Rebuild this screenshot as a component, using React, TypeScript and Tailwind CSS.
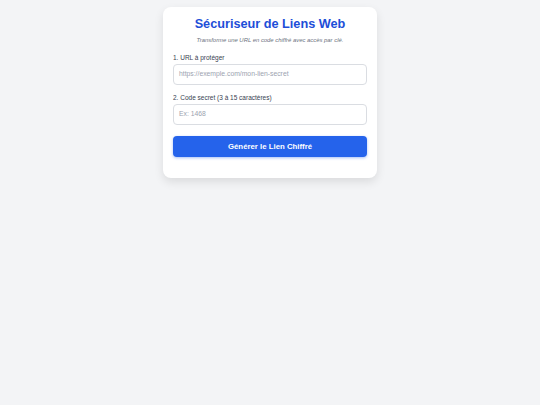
export default function App() {
  return (
    <div className="min-h-[405px] w-full bg-[#f3f4f6] flex justify-center" style={{ fontFamily: '"Liberation Sans", Arial, sans-serif' }}>
      <div className="mt-[7px] w-[214px] h-[171px] bg-white rounded-[8px] shadow-[0_4px_10px_rgba(0,0,0,0.1)] px-[10px] pt-[9px]">
        <h1 className="text-center text-[12.7px] leading-[16px] font-bold text-[#1d4ed8]">Sécuriseur de Liens Web</h1>
        <p className="text-center text-[5.9px] italic text-[#6b7280] mt-[5px] leading-[7px]">Transforme une URL en code chiffré avec accès par clé.</p>
        <div className="mt-[10px]">
          <label className="block text-[6.5px] leading-[8px] text-[#374151]">1. URL à protéger</label>
          <div className="mt-[2px] h-[21px] border border-[#dadde2] rounded-[4px] flex items-center px-[5px] text-[6.8px] text-[#9ca3af]">https://exemple.com/mon-lien-secret</div>
        </div>
        <div className="mt-[9px]">
          <label className="block text-[6.5px] leading-[8px] text-[#374151]">2. Code secret (3 à 15 caractères)</label>
          <div className="mt-[2px] h-[21px] border border-[#dadde2] rounded-[4px] flex items-center px-[5px] text-[6.8px] text-[#9ca3af]">Ex: 1468</div>
        </div>
        <div className="mt-[11px] h-[21px] bg-[#2563eb] rounded-[4px] flex items-center justify-center text-white font-bold text-[7.8px] shadow-[0_1px_3px_rgba(37,99,235,0.4)]">Générer le Lien Chiffré</div>
      </div>
    </div>
  );
}
